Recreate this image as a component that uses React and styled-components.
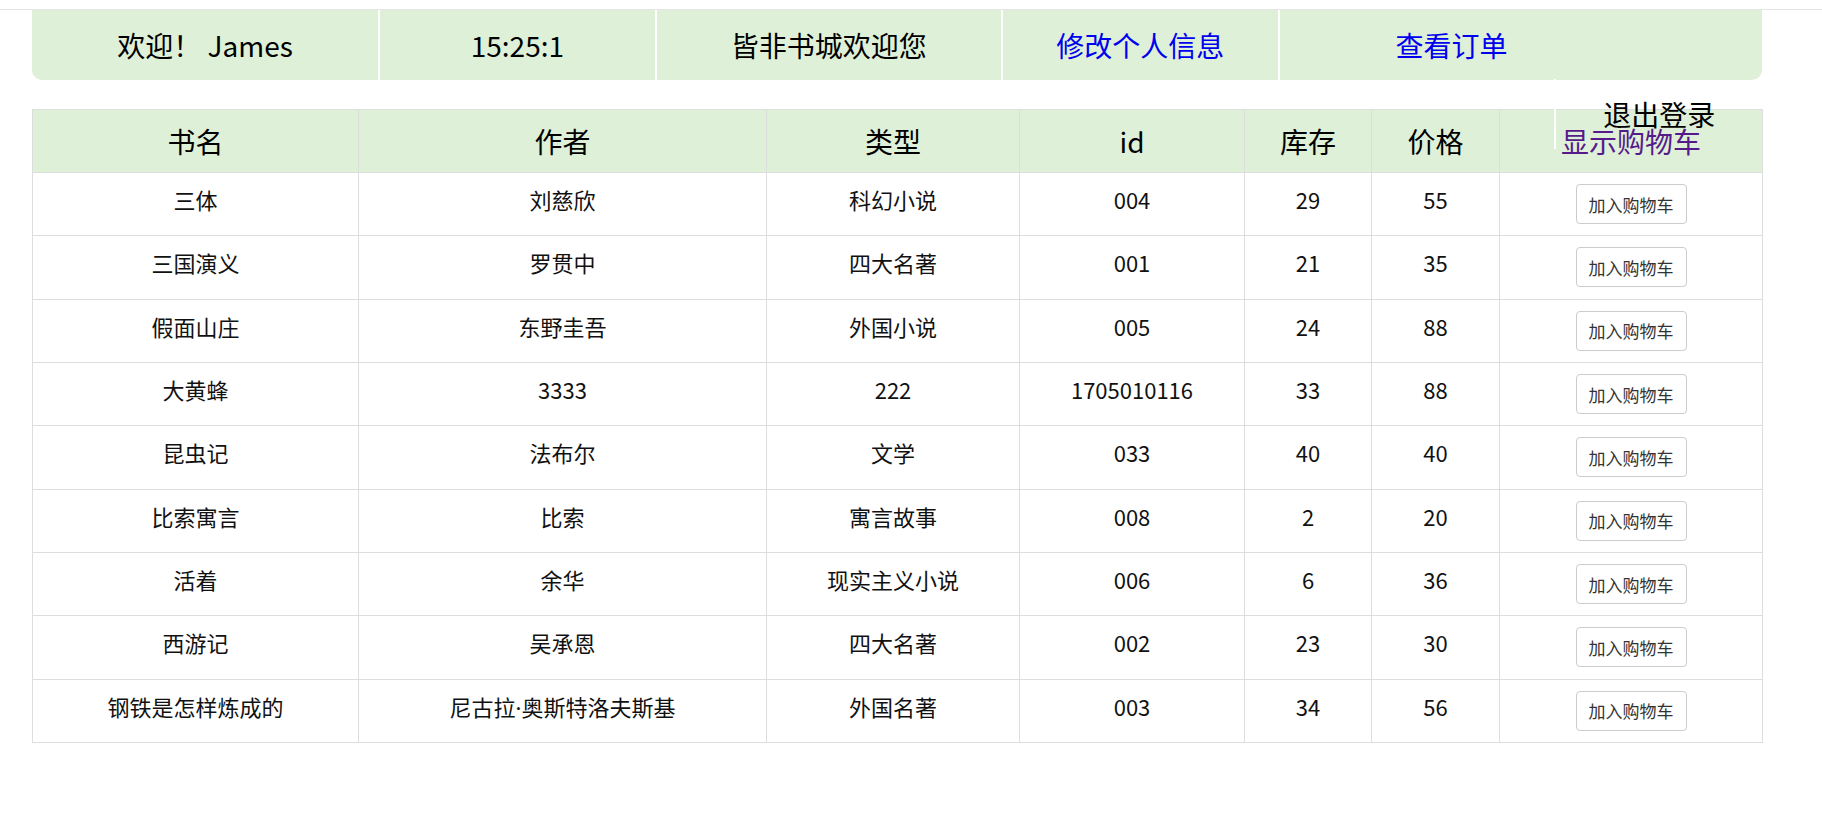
import React from "react";
import styled, { createGlobalStyle } from "styled-components";

const Global = createGlobalStyle`
  html, body { margin: 0; padding: 0; background: #fff; }
  body { font-family: "Noto Sans CJK SC", "Noto Sans", sans-serif; color: #000; }
`;

const TopRule = styled.div`
  margin-top: 9px;
  border-top: 1px solid #e4e4e4;
`;

const Page = styled.div`
  margin-left: 32px;
  width: 1730px;
`;

const Nav = styled.ul`
  position: relative;
  list-style: none;
  margin: 0;
  padding: 0;
  height: 70px;
  display: flex;
  background: #dff0d8;
  border-radius: 0 0 10px 10px;
`;

const NavItem = styled.li`
  flex: 0 0 auto;
  width: ${(p) => p.$w};
  box-sizing: border-box;
  border-left: ${(p) => (p.$first ? "none" : "2px solid #fff")};
  height: 70px;
  line-height: 70px;
  text-align: center;
  font-size: 28px;
  color: #000;
  white-space: nowrap;
`;

const NavLink = styled.a`
  color: ${(p) => (p.$visited ? "#551a8b" : "#0000ee")};
  text-decoration: none;
`;

const Logout = styled.li`
  position: absolute;
  right: 0;
  top: 69px;
  width: 12%;
  height: 70px;
  line-height: 70px;
  box-sizing: border-box;
  border-left: 2px solid #fff;
  text-align: center;
  font-size: 28px;
  color: #000;
  z-index: 2;
`;

const Table = styled.table`
  margin-top: 29px;
  width: 1730px;
  border-collapse: collapse;
  table-layout: fixed;
  border: 1px solid #ddd;
`;

const Th = styled.th`
  background: #dff0d8;
  border: 1px solid #ddd;
  padding: 11px 4px;
  font-size: 28px;
  font-weight: normal;
  line-height: 40px;
  vertical-align: bottom;
  text-align: center;
  color: #000;
`;

const Td = styled.td`
  border: 1px solid #ddd;
  padding: 11px 4px 11.35px;
  font-size: 22px;
  line-height: 31px;
  vertical-align: top;
  text-align: center;
  color: #111;
  white-space: nowrap;
`;

const Dot = styled.span`
  font-family: "Noto Sans", "DejaVu Sans", sans-serif;
`;

const AddButton = styled.button`
  height: 40px;
  padding: 0 12px;
  font-family: "Noto Sans CJK SC", sans-serif;
  font-size: 17px;
  color: #333;
  background: #fff;
  border: 1px solid #ccc;
  border-radius: 4px;
  cursor: pointer;
  vertical-align: top;
`;

const cols = [326, 408, 253, 225, 127, 128, 263];

const renderText = (t) => {
  if (!t.includes("·")) return t;
  const [a, b] = t.split("·");
  return (
    <>
      {a}
      <Dot>·</Dot>
      {b}
    </>
  );
};

const books = [
  ["三体", "刘慈欣", "科幻小说", "004", "29", "55"],
  ["三国演义", "罗贯中", "四大名著", "001", "21", "35"],
  ["假面山庄", "东野圭吾", "外国小说", "005", "24", "88"],
  ["大黄蜂", "3333", "222", "1705010116", "33", "88"],
  ["昆虫记", "法布尔", "文学", "033", "40", "40"],
  ["比索寓言", "比索", "寓言故事", "008", "2", "20"],
  ["活着", "余华", "现实主义小说", "006", "6", "36"],
  ["西游记", "吴承恩", "四大名著", "002", "23", "30"],
  ["钢铁是怎样炼成的", "尼古拉·奥斯特洛夫斯基", "外国名著", "003", "34", "56"],
];

export default function App() {
  return (
    <>
      <Global />
      <TopRule />
      <Page>
        <Nav>
          <NavItem $w="20%" $first>欢迎！ James</NavItem>
          <NavItem $w="16%">15:25:1</NavItem>
          <NavItem $w="20%">皆非书城欢迎您</NavItem>
          <NavItem $w="16%"><NavLink href="#">修改个人信息</NavLink></NavItem>
          <NavItem $w="20%"><NavLink href="#">查看订单</NavLink></NavItem>
          <Logout>退出登录</Logout>
        </Nav>
        <Table>
          <colgroup>
            {cols.map((w, i) => (
              <col key={i} style={{ width: w }} />
            ))}
          </colgroup>
          <thead>
            <tr>
              <Th>书名</Th>
              <Th>作者</Th>
              <Th>类型</Th>
              <Th>id</Th>
              <Th>库存</Th>
              <Th>价格</Th>
              <Th><NavLink href="#" $visited>显示购物车</NavLink></Th>
            </tr>
          </thead>
          <tbody>
            {books.map((b, i) => (
              <tr key={i}>
                {b.map((c, j) => (
                  <Td key={j}>{renderText(c)}</Td>
                ))}
                <Td><AddButton>加入购物车</AddButton></Td>
              </tr>
            ))}
          </tbody>
        </Table>
      </Page>
    </>
  );
}
